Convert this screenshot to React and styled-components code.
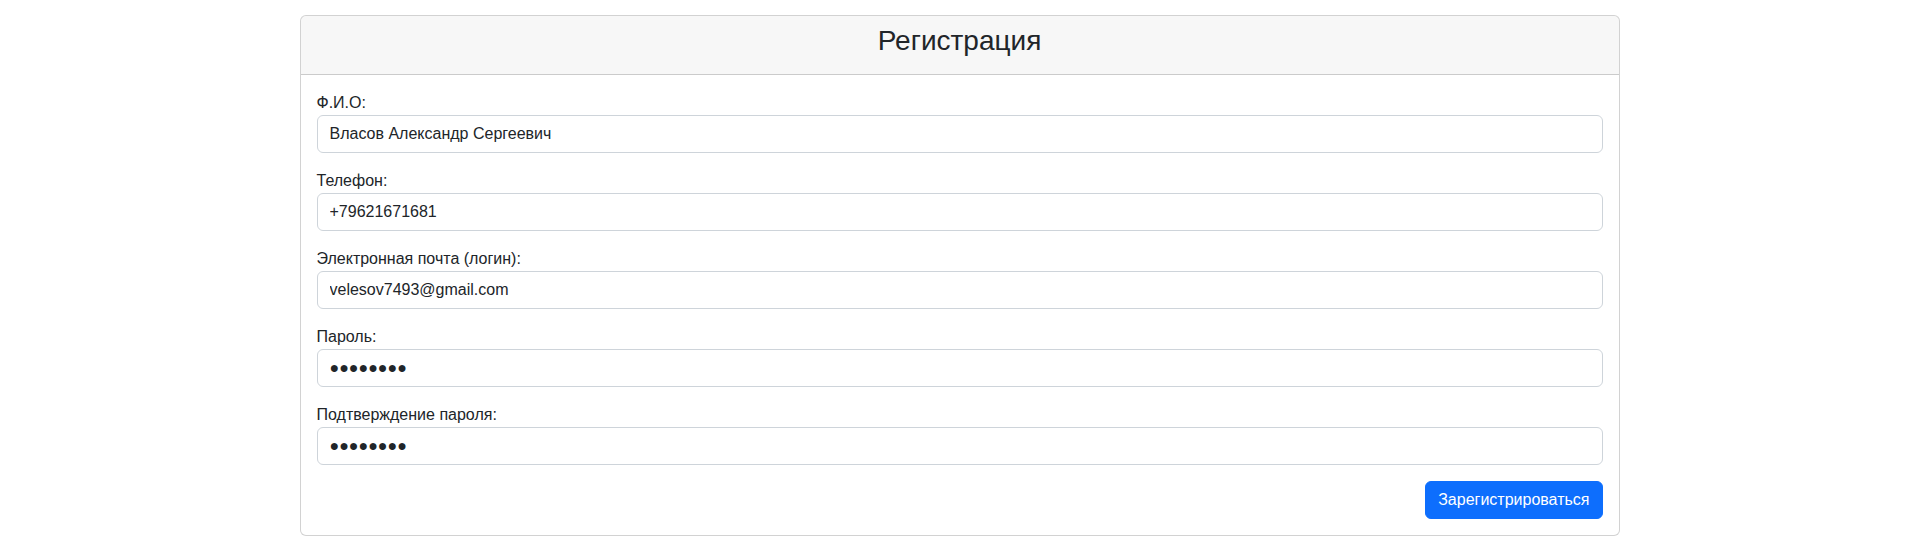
import React from 'react'
import styled, { createGlobalStyle } from 'styled-components'

const GlobalStyle = createGlobalStyle`
  *, *::before, *::after {
    box-sizing: border-box;
  }
  body {
    margin: 0;
    font-family: "Liberation Sans", Arial, sans-serif;
    font-size: 16px;
    line-height: 1.5;
    color: #212529;
    background: #fff;
  }
`

const MASK = '\u25CF'.repeat(8)

const fields = [
  { id: 'fio', label: 'Ф.И.О:', value: 'Власов Александр Сергеевич' },
  { id: 'phone', label: 'Телефон:', value: '+79621671681' },
  { id: 'email', label: 'Электронная почта (логин):', value: 'velesov7493@gmail.com' },
  { id: 'password', label: 'Пароль:', value: MASK },
  { id: 'password2', label: 'Подтверждение пароля:', value: MASK },
]

const App = () => {
  return (
    <>
      <GlobalStyle />
      <Container>
        <Card>
          <CardHeader>
            <Title>Регистрация</Title>
          </CardHeader>
          <CardBody>
            {fields.map((f) => (
              <FormGroup key={f.id}>
                <Label htmlFor={f.id}>{f.label}</Label>
                <Input id={f.id} type="text" defaultValue={f.value} readOnly />
              </FormGroup>
            ))}
            <Actions>
              <SubmitButton type="button">Зарегистрироваться</SubmitButton>
            </Actions>
          </CardBody>
        </Card>
      </Container>
    </>
  )
}

const Container = styled.div`
  width: 1320px;
  margin: 15px auto 0;
`

const Card = styled.div`
  display: flex;
  flex-direction: column;
  border: 1px solid rgba(0, 0, 0, 0.175);
  border-radius: 6px;
  background: #fff;
  overflow: hidden;
`

const CardHeader = styled.div`
  padding: 8px 16px;
  background: rgba(0, 0, 0, 0.03);
  border-bottom: 1px solid rgba(0, 0, 0, 0.175);
  text-align: center;
`

const Title = styled.h3`
  margin: 0 0 8px;
  font-size: 28px;
  font-weight: 500;
  line-height: 1.2;
`

const CardBody = styled.div`
  padding: 16px;
`

const FormGroup = styled.div`
  margin-bottom: 16px;
`

const Label = styled.label`
  display: inline-block;
`

const Input = styled.input`
  display: block;
  width: 100%;
  height: 38px;
  padding: 6px 12px;
  font-family: inherit;
  font-size: 16px;
  line-height: 1.5;
  color: #212529;
  background: #fff;
  border: 1px solid #ced4da;
  border-radius: 6px;
  outline: none;
`

const Actions = styled.div`
  display: flex;
  justify-content: flex-end;
`

const SubmitButton = styled.button`
  height: 38px;
  padding: 6px 12px;
  font-family: inherit;
  font-size: 16px;
  line-height: 1.5;
  color: #fff;
  background: #0d6efd;
  border: 1px solid #0d6efd;
  border-radius: 6px;
  cursor: pointer;
`

export default App
